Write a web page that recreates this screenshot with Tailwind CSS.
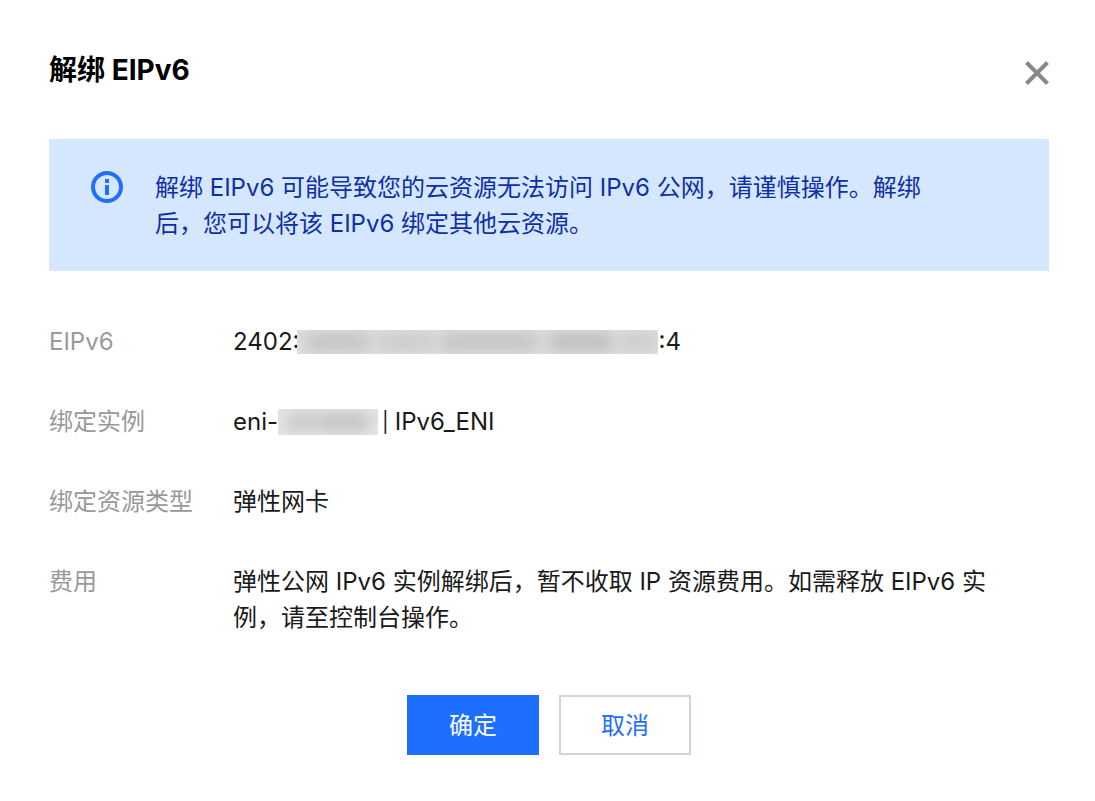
<!DOCTYPE html>
<html lang="zh-CN">
<head>
    <meta charset="UTF-8">
    <meta name="viewport" content="width=device-width, initial-scale=1.0">
    <title>解绑 EIPv6</title>
    <script src="https://cdn.jsdelivr.net/npm/@tailwindcss/browser@4"></script>
</head>
<body class="bg-white font-['Inter','Noto_Sans_CJK_SC',sans-serif] text-2xl leading-9 text-[#1a1a1a]">
    <div role="dialog" aria-labelledby="dialog-title" class="pt-[50px] pb-[46px] pl-[49px] pr-[46px]">
        <div class="flex items-start justify-between">
            <h1 id="dialog-title" class="text-[28px] leading-10 font-bold text-black">解绑 EIPv6</h1>
            <button type="button" aria-label="关闭" class="-mr-1 mt-[7px] text-[#888888]">
                <svg class="size-8" viewBox="0 0 32 32" fill="none" stroke="currentColor" stroke-width="4">
                    <path d="M5.5 5.5 26.5 26.5M26.5 5.5 5.5 26.5"/>
                </svg>
            </button>
        </div>

        <div class="mt-[49px] flex items-start gap-8 bg-[#d5e7ff] pt-[31px] pb-[29px] pl-[42px] pr-28 text-[#0f2fa8]">
            <svg class="mt-px size-8 shrink-0 text-[#1e6fff]" viewBox="0 0 32 32" fill="none">
                <circle cx="16" cy="16" r="14" stroke="currentColor" stroke-width="4"/>
                <path d="M14 8h4v4h-4zM14 14h4v10h-4z" fill="currentColor"/>
            </svg>
            <p>解绑 EIPv6 可能导致您的云资源无法访问 IPv6 公网，请谨慎操作。解绑后，您可以将该 EIPv6 绑定其他云资源。</p>
        </div>

        <dl class="mt-[53px] grid grid-cols-[184px_1fr] gap-y-11 pr-12">
            <dt class="text-[#999999]">EIPv6</dt>
            <dd class="flex items-center">
                <span>2402:</span>
                <!-- masked part of the address -->
                <span class="-ml-0.5 flex h-6 w-[361px] items-center overflow-hidden bg-[#e0e0e0]">
                    <span class="ml-2 h-4 w-16 bg-[#bebebe] blur-[8px]"></span>
                    <span class="ml-2 h-4 w-14 bg-[#c8c8c8] blur-[8px]"></span>
                    <span class="ml-2 h-4 w-24 bg-[#bebebe] blur-[8px]"></span>
                    <span class="ml-3 h-4 w-16 bg-[#b8b8b8] blur-[8px]"></span>
                    <span class="ml-2 h-4 w-9 bg-[#c8c8c8] blur-[8px]"></span>
                </span>
                <span>:4</span>
            </dd>

            <dt class="text-[#999999]">绑定实例</dt>
            <dd class="flex items-center">
                <span>eni-</span>
                <span class="flex h-[26px] w-[100px] items-center overflow-hidden bg-[#e6e6e6]">
                    <span class="ml-2 h-4 w-8 bg-[#c4c4c4] blur-[8px]"></span>
                    <span class="h-4 w-13 bg-[#bebebe] blur-[8px]"></span>
                </span>
                <span class="ml-1 mr-1.5 text-xl">|</span>
                <span>IPv6_ENI</span>
            </dd>

            <dt class="text-[#999999]">绑定资源类型</dt>
            <dd>弹性网卡</dd>

            <dt class="text-[#999999]">费用</dt>
            <dd>弹性公网 IPv6 实例解绑后，暂不收取 IP 资源费用。如需释放 EIPv6 实例，请至控制台操作。</dd>
        </dl>

        <div class="mt-[59px] flex justify-center gap-5">
            <button type="button" class="h-[60px] w-[132px] bg-[#1e6fff] pt-0.5 text-white">确定</button>
            <button type="button" class="h-[60px] w-[132px] border-2 border-[#cfd5de] pt-0.5 text-[#1e6fff]">取消</button>
        </div>
    </div>
</body>
</html>
